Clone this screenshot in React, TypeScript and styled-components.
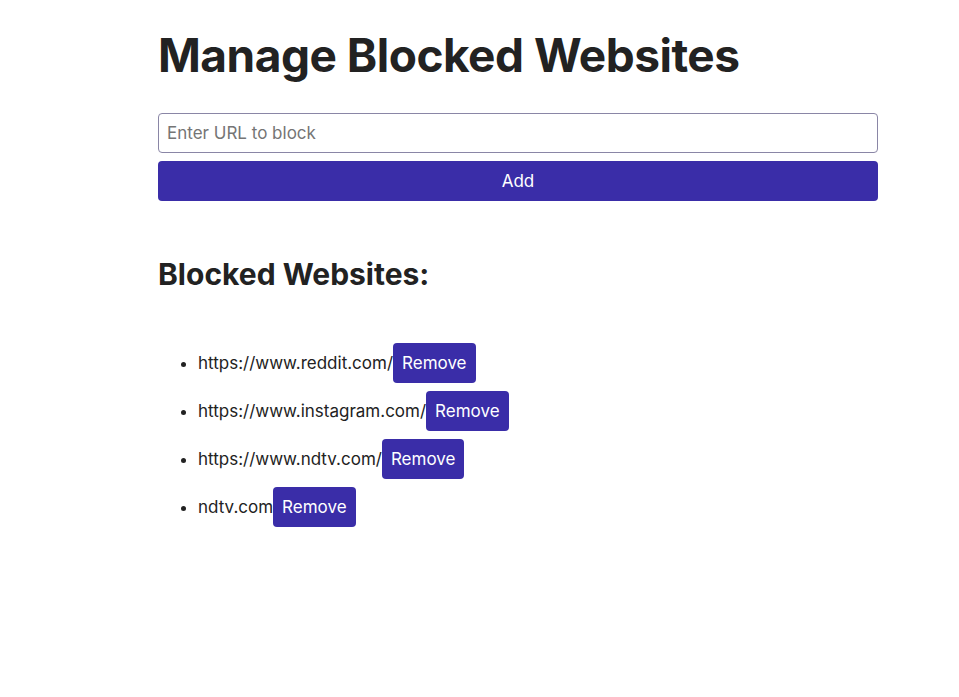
import React from "react";
import styled, { createGlobalStyle } from "styled-components";

const Global = createGlobalStyle`
  html, body { margin: 0; padding: 0; background: #fff; }
  body { font-family: Inter, "Noto Sans", sans-serif; color: #222; }
`;

const Page = styled.div`
  width: 720px;
  margin-left: 158px;
  padding-top: 26px;
`;

const Title = styled.h1`
  margin: 0 0 29px;
  font-size: 46px;
  font-weight: 700;
  line-height: 58px;
  letter-spacing: -0.5px;
  color: #222;
`;

const Form = styled.div`
  display: flex;
  flex-direction: column;
  gap: 8px;
`;

const Input = styled.input`
  box-sizing: border-box;
  width: 100%;
  height: 40px;
  border: 1px solid #8a86a6;
  border-radius: 4px;
  padding: 0 8px;
  font-family: inherit;
  font-size: 17px;
  color: #222;
  &::placeholder { color: #757575; }
`;

const Primary = styled.button`
  box-sizing: border-box;
  height: 40px;
  border: none;
  border-radius: 4px;
  background: #3a2da8;
  color: #fff;
  font-family: inherit;
  font-size: 17px;
  padding: 0 9px;
  cursor: pointer;
`;

const SubTitle = styled.h2`
  margin: 56px 0 0;
  font-size: 30px;
  font-weight: 700;
  line-height: 34px;
  color: #222;
`;

const List = styled.ul`
  margin: 52px 0 0;
  padding-left: 40px;
  font-size: 17px;
`;

const Item = styled.li`
  margin-bottom: 8px;
  line-height: 40px;
`;

const Row = styled.span`
  display: inline-flex;
  align-items: center;
  vertical-align: top;
`;

const sites = [
  "https://www.reddit.com/",
  "https://www.instagram.com/",
  "https://www.ndtv.com/",
  "ndtv.com",
];

export default function App() {
  return (
    <>
      <Global />
      <Page>
        <Title>Manage Blocked Websites</Title>
        <Form>
          <Input placeholder="Enter URL to block" />
          <Primary>Add</Primary>
        </Form>
        <SubTitle>Blocked Websites:</SubTitle>
        <List>
          {sites.map((s) => (
            <Item key={s}>
              <Row>
                {s}
                <Primary>Remove</Primary>
              </Row>
            </Item>
          ))}
        </List>
      </Page>
    </>
  );
}
